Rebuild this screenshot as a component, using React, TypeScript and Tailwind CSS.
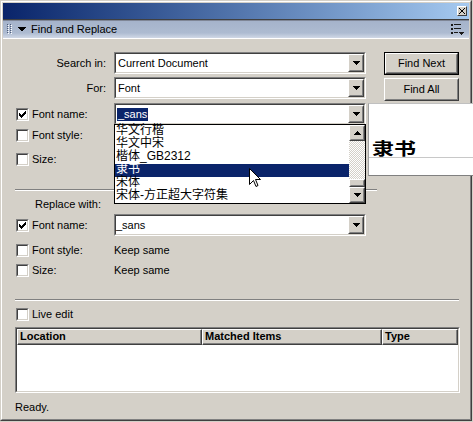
import React from "react";

const fontList = ["华文行楷", "华文中宋", "楷体_GB2312", "隶书", "宋体", "宋体-方正超大字符集"];

// classic 3D borders
function Raised({ className = "", children }: { className?: string; children?: React.ReactNode }) {
  return (
    <div className={`border border-t-white border-l-white border-b-[#404040] border-r-[#404040] bg-[#d4d0c8] ${className}`}>
      <div className="w-full h-full border border-t-[#d4d0c8] border-l-[#d4d0c8] border-b-[#808080] border-r-[#808080] flex items-center justify-center">
        {children}
      </div>
    </div>
  );
}

function Tri({ up = false }: { up?: boolean }) {
  return (
    <svg width="7" height="4" viewBox="0 0 7 4" shapeRendering="crispEdges">
      <path
        d={up ? "M3 0h1v1h1v1h1v1h1v1h-7v-1h1v-1h1v-1h1z" : "M0 0h7v1h-1v1h-1v1h-1v1h-1v-1h-1v-1h-1v-1h-1z"}
        fill="black"
      />
    </svg>
  );
}

function Select({ children }: { children?: React.ReactNode }) {
  return (
    <div className="w-[252px] h-[22px] border border-t-[#808080] border-l-[#808080] border-b-white border-r-white">
      <div className="h-full border border-t-[#404040] border-l-[#404040] border-b-[#d4d0c8] border-r-[#d4d0c8] bg-white flex items-center">
        <div className="flex-1 min-w-0 h-full flex items-center">{children}</div>
        <Raised className="w-4 h-[18px] shrink-0">
          <Tri />
        </Raised>
      </div>
    </div>
  );
}

function Check({ checked = false }: { checked?: boolean }) {
  return (
    <div className="w-[13px] h-[13px] shrink-0 border border-t-[#808080] border-l-[#808080] border-b-white border-r-white">
      <div className="w-full h-full border border-t-[#404040] border-l-[#404040] border-b-[#d4d0c8] border-r-[#d4d0c8] bg-white flex items-center justify-center">
        {checked && (
          <svg width="7" height="7" viewBox="0 0 7 7" shapeRendering="crispEdges">
            <path
              d="M6 0h1v3h-1v1h-1v1h-1v1h-1v1h-1v-1h-1v-1h-1v-3h1v1h1v1h1v-1h1v-1h1v-1h1z"
              fill="black"
            />
          </svg>
        )}
      </div>
    </div>
  );
}

function CheckLabel({ checked, label }: { checked?: boolean; label: string }) {
  return (
    <div className="w-[98px] shrink-0 flex items-center gap-[3px]">
      <Check checked={checked} />
      <span>{label}</span>
    </div>
  );
}

function Label({ text, pr = "pr-2" }: { text: string; pr?: string }) {
  return <div className={`w-[98px] shrink-0 text-right ${pr}`}>{text}</div>;
}

function Button({ label, isDefault = false }: { label: string; isDefault?: boolean }) {
  const inner = <Raised className="w-full h-full">{label}</Raised>;
  return isDefault ? (
    <div className="w-[75px] h-[23px] border border-black">{inner}</div>
  ) : (
    <div className="w-[75px] h-[23px]">{inner}</div>
  );
}

function HeaderCell({ label, className = "" }: { label: string; className?: string }) {
  return (
    <div className={`h-full border border-t-white border-l-white border-b-[#404040] border-r-[#404040] ${className}`}>
      <div className="h-full border-b border-r border-b-[#808080] border-r-[#808080] flex items-center pl-[2px] font-bold">
        {label}
      </div>
    </div>
  );
}

export default function App() {
  return (
    <div className="relative w-[473px] h-[422px] bg-[#d4d0c8] overflow-hidden font-['Liberation_Sans','Noto_Sans_CJK_SC',Arial,sans-serif] text-[11px] leading-none text-black">
      <div className="w-[472px] h-[421px] border border-t-[#d4d0c8] border-l-[#d4d0c8] border-b-[#404040] border-r-[#404040]">
        <div className="w-full h-full border border-t-white border-l-white border-b-[#808080] border-r-[#808080] p-px flex flex-col">
          {/* title bar */}
          <div className="h-4 shrink-0 bg-linear-to-r from-[#0a246a] to-[#a6caf0] flex items-center justify-end pr-[2px]">
            <div className="w-[10px] h-[10px] border border-t-white border-l-white border-b-[#404040] border-r-[#404040] bg-[#d4d0c8] flex items-center justify-center">
              <svg width="6" height="6" viewBox="0 0 6 6" shapeRendering="crispEdges">
                <path d="M0 0h1v1h1v1h2v-1h1v-1h1v1h-1v1h-1v2h1v1h1v1h-1v-1h-1v-1h-2v1h-1v1h-1v-1h1v-1h1v-2h-1v-1h-1z" fill="black" />
              </svg>
            </div>
          </div>
          <div className="h-px shrink-0 bg-[#404040]" />
          <div className="h-px shrink-0 bg-[#7f8696]" />

          {/* panel header */}
          <div className="h-[17px] shrink-0 bg-linear-to-b from-[#a5b3cb] via-[#adbbd1] via-70% to-[#d0d8e6] flex items-center pl-[4px] pr-[3px]">
            <svg width="6" height="11" viewBox="0 0 6 11" shapeRendering="crispEdges">
              {[0, 2, 4, 6, 8].map((y) => (
                <g key={y}>
                  <rect x="0" y={y} width="1" height="1" fill="#4f5d78" />
                  <rect x="3" y={y} width="1" height="1" fill="#4f5d78" />
                  <rect x="1" y={y + 1} width="1" height="1" fill="#ffffff" />
                  <rect x="4" y={y + 1} width="1" height="1" fill="#ffffff" />
                </g>
              ))}
            </svg>
            <svg width="8" height="5" viewBox="0 0 8 5" className="ml-[5px]" shapeRendering="crispEdges">
              <path d="M0 0h8v1h-1v1h-1v1h-1v1h-1v1h-0v-1h-1v-1h-1v-1h-1v-1h-1z" fill="black" />
            </svg>
            <span className="ml-[5px]">Find and Replace</span>
            <svg width="13" height="11" viewBox="0 0 13 11" className="ml-auto mr-[2px]" shapeRendering="crispEdges">
              <rect x="0" y="0" width="2" height="2" fill="#1a1a1a" />
              <rect x="3" y="0" width="7" height="1" fill="#1a1a1a" />
              <rect x="0" y="4" width="2" height="2" fill="#1a1a1a" />
              <rect x="3" y="4" width="7" height="1" fill="#1a1a1a" />
              <rect x="0" y="8" width="2" height="2" fill="#1a1a1a" />
              <rect x="3" y="8" width="4" height="1" fill="#1a1a1a" />
              <path d="M8 8h5v1h-1v1h-1v1h-1v-1h-1v-1h-1z" fill="#1a1a1a" />
            </svg>
          </div>
          <div className="h-px shrink-0 bg-white" />

          {/* body */}
          <div className="flex-1 pl-[13px] flex flex-col">
            <div className="flex">
              <div className="w-[350px] flex flex-col">
                <div className="mt-[13px] h-[22px] flex items-center">
                  <Label text="Search in:" />
                  <Select>
                    <span className="pl-[2px]">Current Document</span>
                  </Select>
                </div>
                <div className="mt-[3px] h-[22px] flex items-center">
                  <Label text="For:" />
                  <Select>
                    <span className="pl-[2px]">Font</span>
                  </Select>
                </div>
                <div className="mt-[4px] h-[22px] flex items-center">
                  <CheckLabel checked label="Font name:" />
                  <Select>
                    <span className="ml-px pl-[1px] pr-px h-[13px] leading-[13px] bg-[#0a246a] text-white">_sans</span>
                  </Select>
                </div>
                <div className="h-[20px] flex items-center">
                  <CheckLabel label="Font style:" />
                </div>
                <div className="mt-[4px] h-[20px] flex items-center">
                  <CheckLabel label="Size:" />
                </div>
              </div>
              <div className="ml-[18px] pt-[13px] flex flex-col gap-[3px]">
                <Button label="Find Next" isDefault />
                <Button label="Find All" />
              </div>
            </div>

            <div className="mt-[20px] -ml-px w-[362px] h-[2px] border-t border-t-[#808080] border-b border-b-white" />

            <div className="mt-[6px] h-[14px] flex items-center">
              <Label text="Replace with:" pr="pr-[13px]" />
            </div>
            <div className="mt-[3px] h-[22px] flex items-center">
              <CheckLabel checked label="Font name:" />
              <Select>
                <span>_sans</span>
              </Select>
            </div>
            <div className="mt-[4px] h-[20px] flex items-center">
              <CheckLabel label="Font style:" />
              <span>Keep same</span>
            </div>
            <div className="h-[20px] flex items-center">
              <CheckLabel label="Size:" />
              <span>Keep same</span>
            </div>

            <div className="mt-[19px] -ml-px w-[444px] h-[2px] border-t border-t-[#808080] border-b border-b-white" />

            <div className="mt-[3px] h-[20px] flex items-center gap-[3px]">
              <Check />
              <span>Live edit</span>
            </div>

            <div className="mt-[3px] -ml-px w-[445px] h-[66px] border border-t-[#808080] border-l-[#808080] border-b-white border-r-white">
              <div className="w-full h-full border border-t-[#404040] border-l-[#404040] border-b-[#d4d0c8] border-r-[#d4d0c8] bg-white flex flex-col">
                <div className="h-4 shrink-0 flex bg-[#d4d0c8]">
                  <HeaderCell label="Location" className="w-[185px]" />
                  <HeaderCell label="Matched Items" className="w-[180px]" />
                  <HeaderCell label="Type" className="flex-1" />
                </div>
              </div>
            </div>

            <div className="mt-[7px] -ml-px h-[14px] flex items-center">Ready.</div>
          </div>
        </div>
      </div>

      {/* open dropdown list */}
      <div className="absolute left-[114px] top-[124px] w-[252px] h-[80px] border border-black bg-white flex font-['Liberation_Sans','Noto_Sans_CJK_SC',sans-serif] text-[12px]">
        <div className="flex-1 flex flex-col">
          {fontList.map((f) => (
            <div
              key={f}
              className={`h-[13px] leading-[13px] pl-px whitespace-nowrap ${f === "隶书" ? "bg-[#0a246a] text-white" : ""}`}
            >
              <span className="relative -top-px">{f}</span>
            </div>
          ))}
        </div>
        <div className="w-4 flex flex-col">
          <Raised className="w-4 h-4 shrink-0">
            <Tri up />
          </Raised>
          <div className="flex-1 bg-[repeating-conic-gradient(#d4d0c8_0%_25%,#ffffff_0%_50%)] bg-[length:2px_2px]" />
          <Raised className="w-4 h-[8px] shrink-0" />
          <Raised className="w-4 h-4 shrink-0">
            <Tri />
          </Raised>
        </div>
      </div>

      {/* font preview */}
      <div className="absolute left-[368px] top-[103px] w-[105px] h-[73px] bg-white border border-r-0 border-t-[#c0c0c0] border-l-[#a0a0a0] border-b-[#808080]">
        <div className="absolute left-0 right-0 top-[53px] h-px bg-[#c8c8c8]" />
        <div className="absolute left-[3px] top-[30px] h-[22px] leading-[22px] text-[22px] font-bold font-['Noto_Sans_CJK_SC',sans-serif] scale-y-[0.75] origin-bottom">
          隶书
        </div>
      </div>

      {/* mouse pointer */}
      <svg width="12" height="20" viewBox="0 0 12 20" className="absolute left-[249px] top-[168px]">
        <path d="M0.5 0.5 V16.5 L4.5 12.5 L7 18.5 L9 17.5 L6.5 11.5 H11.5 Z" fill="white" stroke="black" strokeWidth="1" />
      </svg>
    </div>
  );
}
